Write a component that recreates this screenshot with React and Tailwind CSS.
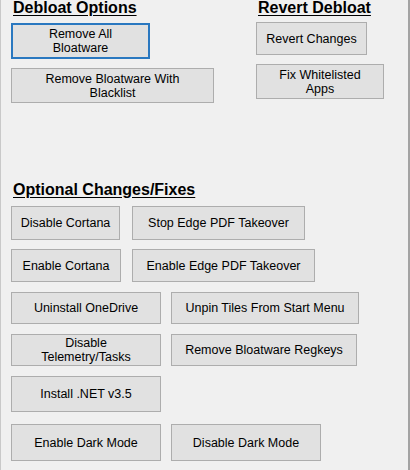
import React from 'react';

const Btn = ({ w, h, focus, children, className = '' }) => (
  <div
    className={`flex items-center justify-center text-center text-[12.5px] leading-[14px] text-black bg-[#e1e1e1] ${focus ? 'border-2 border-[#2a78c0]' : 'border border-[#adadad]'} ${className}`}
    style={{ width: w, height: h }}
  >
    <span>{children}</span>
  </div>
);

const Head = ({ children, className = '' }) => (
  <div className={`text-[16px] leading-[16px] font-bold underline underline-offset-[2px] text-black ${className}`}>{children}</div>
);

export default function App() {
  return (
    <div className="w-[410px] h-[470px] bg-[#f0f0f0] overflow-hidden border-l border-l-[#c9c9c9] border-r-2 border-r-[#a3a3a3] font-['Liberation_Sans',Arial,sans-serif]">
      <div className="flex">
        <div className="pl-[10px] flex flex-col">
          <Head className="ml-[2px]">Debloat Options</Head>
          <Btn w={139} h={36} focus className="mt-[7px]">Remove All<br />Bloatware</Btn>
          <Btn w={203} h={35} className="mt-[9px]">Remove Bloatware With<br />Blacklist</Btn>
        </div>
        <div className="ml-[42px] flex flex-col">
          <Head className="ml-[2px]">Revert Debloat</Head>
          <Btn w={111} h={33} className="mt-[6px]">Revert Changes</Btn>
          <Btn w={128} h={35} className="mt-[9px]">Fix Whitelisted<br />Apps</Btn>
        </div>
      </div>

      <div className="pl-[10px] mt-[79px]">
        <Head className="ml-[2px]">Optional Changes/Fixes</Head>
        <div className="flex gap-[12px] mt-[8px]">
          <Btn w={109} h={34}>Disable Cortana</Btn>
          <Btn w={173} h={34}>Stop Edge PDF Takeover</Btn>
        </div>
        <div className="flex gap-[11px] mt-[9px]">
          <Btn w={110} h={33}>Enable Cortana</Btn>
          <Btn w={183} h={33}>Enable Edge PDF Takeover</Btn>
        </div>
        <div className="flex gap-[10px] mt-[10px]">
          <Btn w={150} h={32}>Uninstall OneDrive</Btn>
          <Btn w={188} h={32}>Unpin Tiles From Start Menu</Btn>
        </div>
        <div className="flex gap-[10px] mt-[10px]">
          <Btn w={150} h={32}>Disable<br />Telemetry/Tasks</Btn>
          <Btn w={186} h={32}>Remove Bloatware Regkeys</Btn>
        </div>
        <div className="flex gap-[10px] mt-[10px]">
          <Btn w={150} h={36}>Install .NET v3.5</Btn>
        </div>
        <div className="flex gap-[10px] mt-[12px]">
          <Btn w={150} h={37}>Enable Dark Mode</Btn>
          <Btn w={150} h={37}>Disable Dark Mode</Btn>
        </div>
      </div>
    </div>
  );
}
